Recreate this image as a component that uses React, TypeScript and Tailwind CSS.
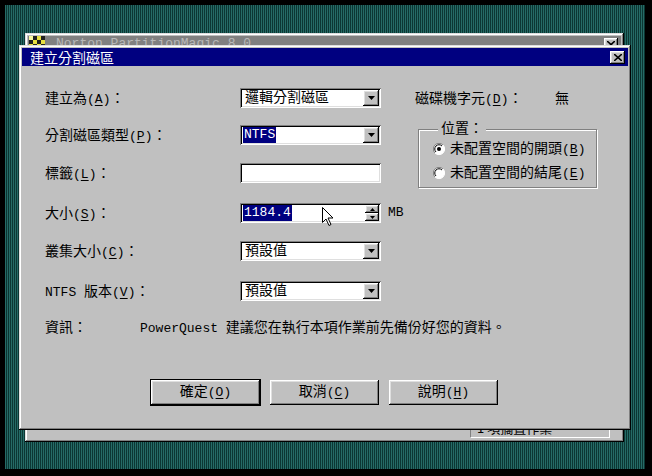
import type { ReactNode } from "react";

const sunken =
  "shadow-[inset_1px_1px_0_#808080,inset_-1px_-1px_0_#ffffff,inset_2px_2px_0_#000000,inset_-2px_-2px_0_#dfdfdf]";
const raised =
  "shadow-[inset_-1px_-1px_0_#000000,inset_1px_1px_0_#ffffff,inset_-2px_-2px_0_#808080,inset_2px_2px_0_#dfdfdf]";
const frame =
  "shadow-[inset_-1px_-1px_0_#000000,inset_1px_1px_0_#dfdfdf,inset_-2px_-2px_0_#808080,inset_2px_2px_0_#ffffff]";

// latin runs are a touch smaller than the CJK glyphs, like the old bitmap font
function L({ children }: { children: ReactNode }) {
  return <span className="text-[13px]">{children}</span>;
}

function Key({ k }: { k: string }) {
  return (
    <span className="text-[13px]">
      (<u className="underline underline-offset-2">{k}</u>)
    </span>
  );
}

function Arrow() {
  return (
    <svg width="7" height="4" viewBox="0 0 7 4">
      <path d="M0 0h7L3.5 4z" fill="#000" />
    </svg>
  );
}

function Combo({ value, selected }: { value: ReactNode; selected?: boolean }) {
  return (
    <div className={`flex h-[20px] w-[141px] items-center bg-white p-[2px] ${sunken}`}>
      <div className="flex h-full flex-1 items-center pl-[1px] leading-[16px]">
        {selected ? (
          <span className="flex h-full items-center bg-[#000080] px-[1px] text-white">{value}</span>
        ) : (
          <span className="pl-[2px]">{value}</span>
        )}
      </div>
      <div className={`flex h-[16px] w-[16px] items-center justify-center bg-[#c0c0c0] ${raised}`}>
        <Arrow />
      </div>
    </div>
  );
}

function Spin({ value }: { value: string }) {
  return (
    <div className={`flex h-[20px] w-[141px] items-center bg-white p-[2px] ${sunken}`}>
      <div className="flex h-full flex-1 items-center pl-[1px]">
        <span className="flex h-full items-center bg-[#000080] px-[1px] text-[13px] text-white">{value}</span>
      </div>
      <div className="flex h-[16px] w-[14px] flex-col">
        <div className={`flex flex-1 items-center justify-center bg-[#c0c0c0] ${raised}`}>
          <svg width="5" height="3" viewBox="0 0 5 3">
            <path d="M0 3h5L2.5 0z" fill="#000" />
          </svg>
        </div>
        <div className={`flex flex-1 items-center justify-center bg-[#c0c0c0] ${raised}`}>
          <svg width="5" height="3" viewBox="0 0 5 3">
            <path d="M0 0h5L2.5 3z" fill="#000" />
          </svg>
        </div>
      </div>
    </div>
  );
}

function Radio({ checked, children }: { checked?: boolean; children: ReactNode }) {
  return (
    <div className="flex h-[20px] items-center gap-[5px]">
      <svg width="12" height="12" viewBox="0 0 12 12">
        <circle cx="6" cy="6" r="5.5" fill="#fff" />
        <path d="M10 2A5.5 5.5 0 0 0 2 10" stroke="#808080" fill="none" />
        <path d="M9 3A4.2 4.2 0 0 0 3 9" stroke="#000" fill="none" />
        <path d="M2 10A5.5 5.5 0 0 0 10 2" stroke="#fff" fill="none" />
        {checked && <circle cx="6" cy="6" r="2" fill="#000" />}
      </svg>
      <span>{children}</span>
    </div>
  );
}

function Button({ children, primary }: { children: ReactNode; primary?: boolean }) {
  return (
    <div
      className={`flex h-[25px] w-[109px] items-center justify-center bg-[#c0c0c0] ${raised} ${
        primary ? "outline outline-1 outline-black" : ""
      }`}
    >
      {children}
    </div>
  );
}

function Row({ label, children, className }: { label: ReactNode; children: ReactNode; className?: string }) {
  return (
    <div className={`flex h-[20px] items-center ${className ?? ""}`}>
      <div className="w-[195px] pt-[3px]">{label}</div>
      {children}
    </div>
  );
}

function PmIcon() {
  return (
    <svg width="16" height="12" viewBox="0 0 16 12">
      <rect width="16" height="12" fill="#e8e040" />
      <path d="M4 0h4v4H4zM12 0h4v4h-4zM8 4h4v4H8zM0 4h4v4H0zM4 8h4v4H4zM12 8h4v4h-4z" fill="#202020" />
      <path d="M0 0h4v4H0z" fill="#f8f8a0" />
    </svg>
  );
}

export default function App() {
  return (
    <div className="h-[476px] w-[652px] bg-black p-[5px] font-['Liberation_Mono','Noto_Sans_CJK_TC',monospace] text-[14px] text-black">
      <div className="relative h-[464px] w-[640px] overflow-hidden bg-[#185450] bg-[repeating-linear-gradient(90deg,#256b66_0px,#256b66_1px,#0c3633_1px,#0c3633_2px)]">
        {/* background app window */}
        <div className={`absolute left-[20px] top-[28px] flex h-[409px] w-[599px] flex-col bg-[#c0c0c0] p-[3px] ${frame}`}>
          <div className="flex h-[13px] items-start bg-[#808080] pl-[1px] pr-[3px]">
            <PmIcon />
            <span className="ml-[11px] text-[13px] leading-[15px] text-[#b8b8b8]">Norton PartitionMagic 8.0</span>
            <div className={`ml-auto mt-[2px] flex h-[13px] w-[14px] items-center justify-center bg-[#c0c0c0] ${raised}`}>
              <svg width="8" height="7" viewBox="0 0 8 7">
                <path d="M0 0l8 7M8 0L0 7" stroke="#000" strokeWidth="1.6" />
              </svg>
            </div>
          </div>
          <div className="flex-1" />
          <div className="flex justify-end pb-[1px] pr-[11px]">
            <div className="flex h-[18px] w-[140px] items-start border border-[#808080] border-b-white border-r-white pl-[6px] font-['Noto_Sans_CJK_TC',sans-serif] text-[13px] leading-[13px]">
              1 項擱置作業
            </div>
          </div>
        </div>

        {/* dialog */}
        <div className={`absolute left-[14px] top-[40px] flex h-[385px] w-[612px] flex-col bg-[#c0c0c0] p-[3px] ${frame}`}>
          <div className="flex h-[18px] items-center bg-[#000080] pl-[8px] pr-[3px]">
            <span className="font-['Noto_Sans_CJK_TC',sans-serif] text-[14px] leading-[18px] text-white">建立分割磁區</span>
            <div className={`ml-auto flex h-[13px] w-[15px] items-center justify-center bg-[#c0c0c0] ${raised}`}>
              <svg width="8" height="7" viewBox="0 0 8 7">
                <path d="M0 0l8 7M8 0L0 7" stroke="#000" strokeWidth="1.6" />
              </svg>
            </div>
          </div>

          <div className="flex flex-col pl-[23px] pt-[22px]">
            <div className="flex">
              <div className="flex w-[370px] flex-col">
                <Row label={<>建立為<Key k="A" />：</>}>
                  <Combo value="邏輯分割磁區" />
                </Row>
                <Row className="mt-[17px]" label={<>分割磁區類型<Key k="P" />：</>}>
                  <Combo value={<L>NTFS</L>} selected />
                </Row>
                <Row className="mt-[18px]" label={<>標籤<Key k="L" />：</>}>
                  <div className={`h-[20px] w-[141px] bg-white ${sunken}`} />
                </Row>
                <Row className="mt-[20px]" label={<>大小<Key k="S" />：</>}>
                  <Spin value="1184.4" />
                  <span className="ml-[7px] text-[13px]">MB</span>
                </Row>
                <Row className="mt-[18px]" label={<>叢集大小<Key k="C" />：</>}>
                  <Combo value="預設值" />
                </Row>
                <Row className="mt-[20px]" label={<><L>NTFS </L>版本<Key k="V" />：</>}>
                  <Combo value="預設值" />
                </Row>
              </div>

              <div className="flex flex-col">
                <div className="flex h-[20px] items-center pt-[3px]">
                  <span className="w-[140px]">磁碟機字元<Key k="D" />：</span>
                  <span>無</span>
                </div>
                <div className="relative ml-[3px] mt-[21px] flex h-[59px] w-[179px] flex-col border border-[#808080] pl-[14px] pt-[9px] shadow-[1px_1px_0_#ffffff,inset_1px_1px_0_#ffffff]">
                  <span className="absolute left-[19px] top-[-10px] bg-[#c0c0c0] px-[3px] leading-[18px]">位置：</span>
                  <Radio checked>未配置空間的開頭<Key k="B" /></Radio>
                  <div className="mt-[4px]">
                    <Radio>未配置空間的結尾<Key k="E" /></Radio>
                  </div>
                </div>
              </div>
            </div>

            <div className="mt-[17px] flex h-[20px] items-center">
              <span className="w-[95px]">資訊：</span>
              <span><L>PowerQuest </L>建議您在執行本項作業前先備份好您的資料。</span>
            </div>

            <div className="ml-[106px] mt-[42px] flex gap-[10px]">
              <Button primary>確定<Key k="O" /></Button>
              <Button>取消<Key k="C" /></Button>
              <Button>說明<Key k="H" /></Button>
            </div>
          </div>
        </div>

        {/* mouse pointer */}
        <svg className="absolute left-[317px] top-[202px]" width="12" height="20" viewBox="0 0 12 20">
          <path d="M0.5 0.5v15l3.5-3.5 3 6.5 2-1-3-6.5h5z" fill="#fff" stroke="#000" strokeWidth="1" />
        </svg>
      </div>
    </div>
  );
}
